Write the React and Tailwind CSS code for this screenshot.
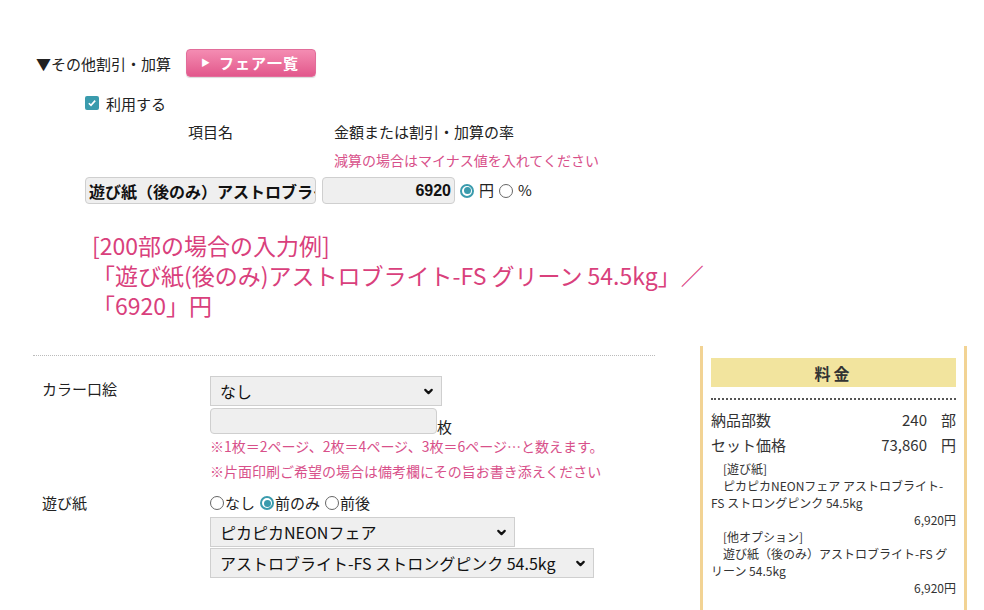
import { ChevronDown } from "lucide-react";

const jp = { fontFamily: '"Noto Sans CJK JP", "Noto Sans", sans-serif' };

function Select({ value, className }) {
  return (
    <div className={`relative flex items-center bg-[#efefef] border border-[#cfcfcf] h-[30px] pl-[9px] text-[16px] text-[#111] ${className}`}>
      <span className="whitespace-nowrap">{value}</span>
      <ChevronDown className="absolute right-[6px] w-[13px] h-[13px] text-[#111]" strokeWidth={4} />
    </div>
  );
}

function Radio({ checked }) {
  return checked ? (
    <span className="inline-flex items-center justify-center w-[14px] h-[14px] rounded-full border-2 border-[#3a9bad]">
      <span className="w-[7px] h-[7px] rounded-full bg-[#3a9bad]" />
    </span>
  ) : (
    <span className="inline-block w-[14px] h-[14px] rounded-full border border-[#666]" />
  );
}

export default function App() {
  return (
    <div className="w-[984px] h-[610px] overflow-hidden bg-white text-[#222]" style={jp}>
      {/* その他割引・加算 */}
      <div className="pt-[48px] pl-[36px]">
        <div className="flex items-center h-[30px]">
          <span className="text-[15px] leading-none">▼その他割引・加算</span>
          <button className="ml-[15px] w-[130px] h-[28px] rounded-[4px] border border-[#e26d9a] bg-gradient-to-b from-[#f48cb2] to-[#e2578c] text-white font-bold text-[15px] flex items-center pl-[14px] gap-[9px] shadow-[0_1px_1px_rgba(0,0,0,0.15)]">
            <span className="text-[9px]">▶</span>
            <span className="tracking-[1px]">フェア一覧</span>
          </button>
        </div>

        <div className="pl-[49px] mt-[17px]">
          <label className="flex items-center gap-[7px] h-[16px]">
            <span className="w-[14px] h-[14px] rounded-[2px] bg-[#3a9bad] flex items-center justify-center">
              <svg viewBox="0 0 12 12" className="w-[10px] h-[10px]">
                <path d="M2.2 6.3 L4.8 8.8 L9.8 3.2" fill="none" stroke="white" strokeWidth="2" />
              </svg>
            </span>
            <span className="text-[15px] leading-none">利用する</span>
          </label>

          <div className="flex mt-[13px] text-[15px] leading-none">
            <span className="ml-[103px] w-[146px]">項目名</span>
            <span>金額または割引・加算の率</span>
          </div>
          <div className="mt-[14px] pl-[249px] text-[14px] leading-none text-[#d8508a]">
            減算の場合はマイナス値を入れてください
          </div>

          <div className="flex items-center mt-[10px] h-[27px]">
            <div className="w-[231px] h-[27px] rounded-[4px] border border-[#cfcfcf] bg-[#efefef] overflow-hidden flex items-center pl-[3px] text-[16px] font-bold text-[#111] whitespace-nowrap">
              遊び紙（後のみ）アストロブライト-FS グリーン 54.5kg
            </div>
            <div className="ml-[6px] w-[133px] h-[27px] rounded-[4px] border border-[#cfcfcf] bg-[#efefef] flex items-center justify-end pr-[3px] text-[16px] font-bold text-[#111]" style={{ fontFamily: '"Liberation Sans", Arial, sans-serif' }}>
              6920
            </div>
            <div className="flex items-center ml-[5px] gap-[5px] text-[15px]">
              <Radio checked />
              <span>円</span>
              <Radio />
              <span>%</span>
            </div>
          </div>
        </div>

        <div className="mt-[26px] pl-[56px] text-[23px] leading-[30px] text-[#d9407c]">
          <div>[200部の場合の入力例]</div>
          <div>「遊び紙(後のみ)アストロブライト-FS グリーン 54.5kg」／</div>
          <div>「6920」円</div>
        </div>
      </div>

      {/* フォーム + 料金 */}
      <div className="flex mt-[26px]">
        <div className="ml-[33px] w-[622px] mt-[9px] border-t border-dotted border-[#bbb] pt-[20px]">
          <div className="flex">
            <div className="w-[177px] pl-[9px] pt-[2px] text-[15px]">カラー口絵</div>
            <div>
              <Select value="なし" className="w-[232px]" />
              <div className="flex items-end mt-[2px]">
                <div className="w-[227px] h-[26px] rounded-[4px] border border-[#cfcfcf] bg-[#efefef]" />
                <span className="text-[15px] leading-none">枚</span>
              </div>
              <div className="text-[14px] leading-[25px] text-[#d8508a]">
                <div>※1枚＝2ページ、2枚＝4ページ、3枚＝6ページ…と数えます。</div>
                <div>※片面印刷ご希望の場合は備考欄にその旨お書き添えください</div>
              </div>
            </div>
          </div>

          <div className="flex mt-[9px]">
            <div className="w-[177px] pl-[9px] text-[15px] leading-[20px]">遊び紙</div>
            <div>
              <div className="flex items-center gap-[1px] text-[15px] h-[20px]">
                <Radio />
                <span>なし</span>
                <span className="w-[3px]" />
                <Radio checked />
                <span>前のみ</span>
                <span className="w-[3px]" />
                <Radio />
                <span>前後</span>
              </div>
              <Select value="ピカピカNEONフェア" className="w-[305px] mt-[4px]" />
              <Select value="アストロブライト-FS ストロングピンク 54.5kg" className="w-[384px] mt-[1px]" />
            </div>
          </div>
        </div>

        {/* 料金 */}
        <div className="ml-[45px] w-[267px] h-[270px] border-l-[3px] border-r-[3px] border-[#f2d394] px-[8px] pt-[12px]">
          <div className="h-[29px] bg-[#f2e49e] flex items-center justify-center text-[16px] font-bold tracking-[3px] text-[#333]">
            料金
          </div>
          <div className="mt-[11px] border-t-2 border-dotted border-[#555]" />
          <div className="mt-[8px] text-[#333]">
            <div className="flex justify-between items-center h-[25px] text-[15px]">
              <span>納品部数</span>
              <span className="flex gap-[14px]"><span>240</span><span>部</span></span>
            </div>
            <div className="flex justify-between items-center h-[25px] text-[15px]">
              <span>セット価格</span>
              <span className="flex gap-[14px]"><span>73,860</span><span>円</span></span>
            </div>
            <div className="text-[12px] leading-[17px] mt-[2px]">
              <div className="pl-[12px]">[遊び紙]</div>
              <div>　ピカピカNEONフェア アストロブライト-FS ストロングピンク 54.5kg</div>
              <div className="text-right">6,920円</div>
              <div className="pl-[12px]">[他オプション]</div>
              <div>　遊び紙（後のみ）アストロブライト-FS グリーン 54.5kg</div>
              <div className="text-right">6,920円</div>
            </div>
          </div>
        </div>
      </div>
    </div>
  );
}
